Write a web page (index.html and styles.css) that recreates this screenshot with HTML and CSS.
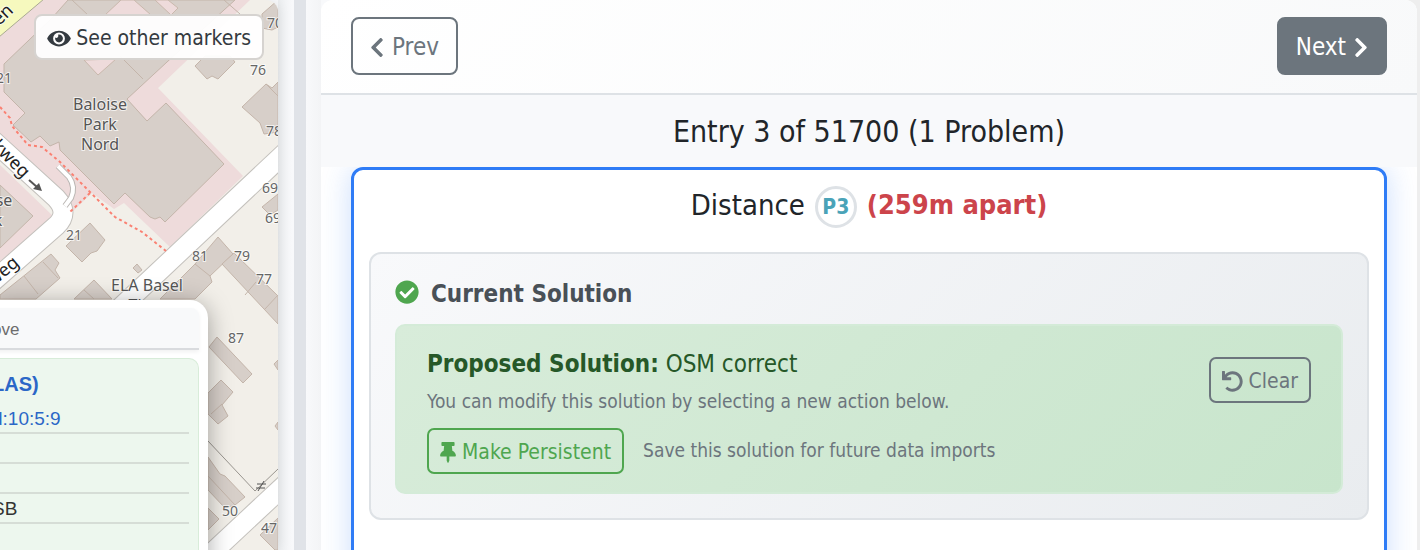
FILE: index.html
```html
<!DOCTYPE html>
<html lang="en">
<head>
<meta charset="utf-8">
<title>Problem entries</title>
<link rel="stylesheet" href="styles.css">
</head>
<body>
<main class="layout">
  <section class="map" aria-label="Map">
    <svg class="map-tiles" viewBox="0 0 278 550" preserveAspectRatio="xMinYMin slice">
      <g class="landuse">
        <path d="M0 0H250L158 88L243 176L170 247L124 203L114 209L92 193L72 212L40 175L0 142Z"/>
        <path d="M0 165L54 217L0 262Z"/>
      </g>
      <g class="building">
        <path d="M68 0L52 18L4 64V92L25 113L13 125L31 142L40 136L50 146L59 142L60 150L92 182L114 204L125 193L150 217L155 219L160 217L165 222L224 164L166 103L147 121L127 99L180 50L235 0Z"/>
        <path d="M0 185L33 216L0 248Z"/>
        <path d="M90 223L105 240L97 251L91 253L82 262L66 246Z"/>
        <path d="M0 295L51 254L59 263L55 270L60 278L36 299H0Z"/>
        <path d="M74 299L94 280L112 299ZM133 268L137 264L142 270L138 273Z"/>
        <path d="M160 299L195 264L218 237L233 254L210 276L212 282L195 299Z"/>
        <path d="M222 264L234 253L278 296V324Z"/>
        <path d="M195 66L205 56H230L235 62L218 79L212 76L207 79Z"/>
        <path d="M242 107L266 84L272 88L278 82V132L264 134L260 123Z"/>
        <path d="M278 0L262 14L262 28L272 30L278 27ZM278 194L262 207L270 215L278 210Z"/>
        <path d="M217 337L252 374L243 383L209 347Z"/>
        <path d="M221 380L233 392L222 405L228 416L218 424L208 414V393Z"/>
        <path d="M208 457L220 474L225 476L245 497L235 505L225 508L208 490Z"/>
        <path d="M208 508L219 519L208 530ZM278 518L260 535L275 550H278ZM278 360L274 364L278 370ZM278 422L275 426L278 430Z"/>
      </g>
      <g class="landuse edged">
        <path d="M121 0L105 15H151L134 0Z"/>
        <path d="M84 60L98 75L116 59Z"/>
        <path d="M155 0L171 15L178 8L168 0Z"/>
      </g>
      <g class="building-line">
        <path d="M72 0L88 15M120 56L143 79M224 0L240 14M195 264L210 276M245 295L256 282M265 309L278 295M24 276L38 294M43 262L58 278M208 476L235 505M211 414L222 404M84 290L94 299M266 84L278 96"/>
      </g>
      <path class="road-casing" d="M290 148L120 308"/>
      <path class="road" d="M290 148L120 308"/>
      <path class="road-casing" d="M-12 136L56 198Q70 213 56 226L-10 284"/>
      <path class="road" d="M-12 136L56 198Q70 213 56 226L-10 284"/>
      <path class="lane-casing" d="M58 166L69 177Q76 187 71 198L65 206"/>
      <path class="lane" d="M58 166L69 177Q76 187 71 198L65 206"/>
      <path class="road-casing" d="M290 480L200 564"/>
      <path class="road" d="M290 480L200 564"/>
      <path class="yellow-road" d="M-1 -1H44L-1 37Z"/>
      <path class="footpath" d="M0 107L10 118L12 126L28 145L42 147L60 162L88 190L115 217L142 232L166 251M90 193L70 212"/>
      <path class="barrier" d="M208 441L255 491L278 469"/>
      <path class="road-arrow" d="M29 180L37 187"/>
      <path class="road-arrow-head" d="M42 191L33 189L39 183Z"/>
      <g class="street-label">
        <text transform="translate(-9 147) rotate(45)">kweg</text>
        <text transform="translate(-7 287) rotate(-40)">weg</text>
        <text transform="translate(-9 34) rotate(-44)">pen</text>
        <text transform="translate(26 0) rotate(-44)">d</text>
      </g>
      <g class="place-label">
        <text x="100" y="110">Baloise</text>
        <text x="100" y="130">Park</text>
        <text x="100" y="150">Nord</text>
        <text x="147" y="291">ELA Basel</text>
        <text x="147" y="311">Thea</text>
        <text x="4" y="206">se</text>
        <text x="-2" y="226">k</text>
      </g>
      <g class="house-label">
        <text x="4" y="83">21</text><text x="258" y="75">76</text><text x="275" y="28">70</text>
        <text x="274" y="136">78</text><text x="270" y="193">69</text><text x="273" y="223">69</text>
        <text x="74" y="240">21</text><text x="200" y="261">81</text><text x="242" y="261">79</text>
        <text x="264" y="284">77</text><text x="236" y="343">87</text><text x="230" y="516">50</text>
        <text x="269" y="533">47</text>
      </g>
      <path class="gate" d="M257 484H266M256 488H265M258 491L264 481"/>
    </svg>
    <button class="markers-btn" type="button">
      <svg class="icon-eye" viewBox="0 0 576 512" aria-hidden="true"><path d="M572.52 241.4C518.29 135.59 410.93 64 288 64S57.68 135.64 3.48 241.41a32.35 32.35 0 0 0 0 29.19C57.71 376.41 165.07 448 288 448s230.32-71.64 284.52-177.41a32.35 32.35 0 0 0 0-29.19zM288 400a144 144 0 1 1 144-144 143.93 143.93 0 0 1-144 144zm0-240a95.31 95.31 0 0 0-25.31 3.79 47.85 47.85 0 0 1-66.9 66.9A95.78 95.78 0 1 0 288 160z"/></svg>
      See other markers
    </button>
    <div class="popup">
      <div class="popup-bar">ove</div>
      <div class="popup-body">
        <div class="popup-title">LAS)</div>
        <div class="popup-row popup-link">d:10:5:9</div>
        <div class="popup-row"></div>
        <div class="popup-row"></div>
        <div class="popup-row">SB</div>
      </div>
    </div>
  </section>
  <div class="divider"></div>
  <section class="panel">
    <nav class="panel-nav">
      <button class="nav-btn" type="button">
        <svg class="icon-chevron" viewBox="0 0 320 512" aria-hidden="true"><path d="M34.52 239.03L228.87 44.69c9.37-9.37 24.57-9.37 33.94 0l22.67 22.67c9.36 9.36 9.37 24.52.04 33.9L131.49 256l154.02 154.75c9.34 9.38 9.32 24.54-.04 33.9l-22.67 22.67c-9.37 9.37-24.57 9.37-33.94 0L34.52 272.97c-9.37-9.37-9.37-24.57 0-33.94z"/></svg>
        Prev
      </button>
      <button class="nav-btn nav-btn-solid" type="button">
        Next
        <svg class="icon-chevron" viewBox="0 0 320 512" aria-hidden="true"><path d="M285.476 272.971L91.132 467.314c-9.373 9.373-24.569 9.373-33.941 0l-22.667-22.667c-9.357-9.357-9.375-24.522-.04-33.901L188.505 256 34.484 101.255c-9.335-9.379-9.317-24.544.04-33.901l22.667-22.667c9.373-9.373 24.569-9.373 33.941 0L285.475 239.03c9.373 9.372 9.373 24.568.001 33.941z"/></svg>
      </button>
    </nav>
    <h1 class="entry-title">Entry 3 of 51700 (1 Problem)</h1>
    <div class="panel-body">
      <article class="problem">
        <h2 class="problem-title">
          <span class="problem-name">Distance</span>
          <span class="priority">P3</span>
          <strong class="apart">(259m apart)</strong>
        </h2>
        <section class="solution">
          <h3 class="solution-title">
            <svg class="icon-check" viewBox="0 0 512 512" aria-hidden="true"><circle cx="256" cy="256" r="240"/><path d="M504 256c0 136.967-111.033 248-248 248S8 392.967 8 256 119.033 8 256 8s248 111.033 248 248zM227.314 387.314l184-184c6.248-6.248 6.248-16.379 0-22.627l-22.627-22.627c-6.248-6.249-16.379-6.249-22.628 0L216 308.118l-70.059-70.059c-6.248-6.248-16.379-6.248-22.628 0l-22.627 22.627c-6.248 6.248-6.248 16.379 0 22.627l104 104c6.249 6.249 16.379 6.249 22.628.001z"/></svg>
            Current Solution
          </h3>
          <div class="proposal">
            <div class="proposal-text">
              <p class="proposal-name"><strong>Proposed Solution:</strong> OSM correct</p>
              <p class="hint">You can modify this solution by selecting a new action below.</p>
              <div class="persist">
                <button class="action-btn action-btn-green" type="button">
                  <svg class="icon-pin" viewBox="0 0 384 512" aria-hidden="true"><path d="M298.028 214.267L285.793 96H328c13.255 0 24-10.745 24-24V24c0-13.255-10.745-24-24-24H56C42.745 0 32 10.745 32 24v48c0 13.255 10.745 24 24 24h42.207L85.972 214.267C37.465 236.82 0 277.261 0 328c0 13.255 10.745 24 24 24h136v104.007c0 1.242.289 2.467.845 3.578l24 48c2.941 5.882 11.364 5.893 14.311 0l24-48a8.008 8.008 0 0 0 .845-3.578V352h136c13.255 0 24-10.745 24-24-.001-51.183-37.983-91.42-85.973-113.733z"/></svg>
                  Make Persistent
                </button>
                <span class="hint">Save this solution for future data imports</span>
              </div>
            </div>
            <button class="action-btn action-btn-clear" type="button">
              <svg class="icon-undo" viewBox="0 0 512 512" aria-hidden="true"><path d="M212.333 224.333H12c-6.627 0-12-5.373-12-12V12C0 5.373 5.373 0 12 0h48c6.627 0 12 5.373 12 12v78.112C117.773 39.279 184.26 7.47 258.175 8.007c136.906.994 246.448 111.623 246.157 248.532C504.041 393.258 393.12 504 256.333 504c-64.089 0-122.496-24.313-166.51-64.215-5.099-4.622-5.334-12.554-.467-17.42l33.967-33.967c4.474-4.474 11.662-4.717 16.401-.525C170.76 415.336 211.58 432 256.333 432c97.268 0 176-78.716 176-176 0-97.267-78.716-176-176-176-58.496 0-110.28 28.476-142.274 72.333h98.274c6.627 0 12 5.373 12 12v48c0 6.627-5.373 12-12 12z"/></svg>
              Clear
            </button>
          </div>
        </section>
      </article>
    </div>
  </section>
</main>
</body>
</html>
```
FILE: styles.css
```css
* { box-sizing: border-box; }

body {
  margin: 0;
  overflow: hidden;
  background: #f8f9fa;
  color: #212529;
  font-family: "DejaVu Sans Condensed", "DejaVu Sans", sans-serif;
  font-stretch: condensed;
}

h1, h2, h3, p { margin: 0; font-weight: 400; }

button { font-family: inherit; font-stretch: inherit; white-space: nowrap; cursor: pointer; }

svg { fill: currentColor; flex: none; }

.layout {
  display: flex;
  height: 100vh;
  padding-right: 3px;
  background: linear-gradient(90deg, #f8f9fb 99%, #eeeeee 99%);
}

/* Map */
.map {
  position: relative;
  flex: 0 0 278px;
  overflow: hidden;
  border-radius: 0 12px 0 0;
  background: #f2efe9;
  box-shadow: 0 0 12px rgba(0, 0, 0, 0.1);
}

.map-tiles { display: block; width: 100%; height: 100%; fill: none; }
.landuse { fill: #eedbdb; }
.edged { stroke: #c9b8ac; stroke-width: 1; }
.building { fill: #d7cfc9; stroke: #c4b5aa; stroke-width: 1; }
.building-line { stroke: #c4b5aa; }
.road-casing { stroke: #c3c0bc; stroke-width: 21; }
.road { stroke: #ffffff; stroke-width: 19; }
.lane-casing { stroke: #bbb7b4; stroke-width: 6; }
.lane { stroke: #ffffff; stroke-width: 4; }
.yellow-road { fill: #f6f9be; stroke: #a9aa92; stroke-width: 1; }
.footpath { stroke: #fa8072; stroke-width: 2; stroke-dasharray: 3 3; }
.barrier { stroke: #99958f; }
.gate { stroke: #555555; }
.road-arrow { stroke: #555555; stroke-width: 2; }
.road-arrow-head { fill: #555555; }

.street-label, .place-label, .house-label {
  font-family: "Noto Sans", sans-serif;
  font-stretch: normal;
  paint-order: stroke;
  stroke: rgba(255, 255, 255, 0.7);
  stroke-width: 2px;
}
.street-label { fill: #222222; font-size: 18px; }
.place-label { fill: #555555; font-size: 16px; text-anchor: middle; }
.house-label { fill: #666666; font-size: 14px; text-anchor: middle; }

.markers-btn {
  position: absolute;
  top: 14px;
  right: 14px;
  display: flex;
  align-items: center;
  gap: 5px;
  height: 46px;
  padding: 2px 11px 0;
  border: 2px solid #d6d3d0;
  border-radius: 8px;
  background: rgba(255, 255, 255, 0.94);
  color: #343a40;
  font-size: 21px;
}
.icon-eye { width: 24px; height: 21px; }

.popup {
  position: absolute;
  top: 300px;
  left: -8px;
  width: 216px;
  height: 300px;
  padding: 8px 9px 0 0;
  border-radius: 0 18px 0 0;
  background: #ffffff;
  box-shadow: 0 4px 24px rgba(0, 0, 0, 0.35);
  font-family: "Liberation Sans", Arial, sans-serif;
  font-size: 19px;
  color: #333333;
}
.popup-bar {
  height: 42px;
  border-bottom: 2px solid #d9dbde;
  border-radius: 0 8px 0 0;
  background: #f8f9fa;
  box-shadow: 0 2px 4px rgba(0, 0, 0, 0.06);
  color: #6c6c6c;
  font-size: 17px;
  line-height: 44px;
}
.popup-body {
  height: 240px;
  margin-top: 8px;
  padding: 8px 9px 0 0;
  border: 1px solid #d8ecd9;
  border-left: 0;
  border-radius: 0 10px 0 0;
  background: #edf7ee;
}
.popup-title { height: 37px; color: #2b67c7; font-size: 20px; font-weight: 700; line-height: 34px; }
.popup-row { height: 30px; border-bottom: 2px solid #d6ddd6; line-height: 30px; }
.popup-link { color: #2b67c7; }

.divider {
  flex: 0 0 43px;
  background: linear-gradient(90deg, #eceef0 0, #f8f9fb 14px, #f8f9fb 16px, transparent 16px, transparent 28px, #f8f9fb 28px, #f3f4f6 43px);
  background-color: #e0e3e8;
}

/* Entry panel */
.panel {
  flex: 1;
  min-width: 0;
  overflow: hidden;
  border-radius: 12px 12px 0 0;
  background: #ffffff;
}

.panel-nav {
  display: flex;
  justify-content: space-between;
  padding: 17px 30px 18px;
  border-bottom: 2px solid #dee2e6;
  background: linear-gradient(135deg, #ffffff, #f8f9fa);
}

.nav-btn {
  display: flex;
  align-items: center;
  gap: 8px;
  height: 58px;
  padding: 2px 17px 0;
  border: 2px solid #6c757d;
  border-radius: 8px;
  background: transparent;
  color: #6c757d;
  font-size: 24px;
}
.nav-btn-solid { background: #6c757d; color: #ffffff; }
.icon-chevron { width: 14px; height: 23px; }

.entry-title {
  position: relative;
  z-index: 1;
  padding: 17px 30px 15px;
  background: #f8f9fb;
  font-size: 30px;
  line-height: 40px;
  text-align: center;
}

.panel-body { padding: 0 30px; }

.problem {
  height: 480px;
  padding: 15px;
  border: 3px solid #2f7cf6;
  border-radius: 12px;
  box-shadow: 0 0 30px rgba(47, 124, 246, 0.25);
}

.problem-title {
  display: flex;
  align-items: center;
  justify-content: center;
  gap: 10px;
  height: 44px;
  font-size: 29px;
}
.problem-name, .apart { padding-bottom: 5px; }
.priority {
  display: grid;
  place-items: center;
  width: 42px;
  height: 42px;
  border: 3px solid #dee2e6;
  border-radius: 50%;
  color: #4aa3b8;
  font-size: 21px;
  font-weight: 700;
}
.apart { color: #cc444b; font-size: 27px; }

.solution {
  margin-top: 23px;
  padding: 24px;
  border: 2px solid #dee2e6;
  border-radius: 12px;
  background: linear-gradient(135deg, #f8f9fb, #e9ecef);
}
.solution-title {
  display: flex;
  align-items: center;
  gap: 12px;
  height: 32px;
  margin-bottom: 14px;
  color: #495057;
  font-size: 24px;
  font-weight: 700;
}
.icon-check { width: 24px; height: 24px; margin-bottom: 5px; color: #4fa64f; }
.icon-check circle { fill: #ffffff; }

.proposal {
  display: flex;
  align-items: flex-start;
  justify-content: space-between;
  padding: 18px 30px;
  border: 2px solid #d4ebd8;
  border-radius: 10px;
  background: linear-gradient(135deg, #d8ecda, #c8e5cc);
}
.proposal-name { color: #265828; font-size: 24px; line-height: 40px; }
.hint { color: #6c757d; font-size: 19px; line-height: 34px; }
.persist { display: flex; align-items: center; gap: 19px; margin-top: 10px; }
.persist .hint { padding-bottom: 3px; }

.action-btn {
  display: flex;
  align-items: center;
  gap: 6px;
  height: 46px;
  padding: 2px 11px 0;
  border: 2px solid #6c757d;
  border-radius: 7px;
  background: transparent;
  color: #6c757d;
  font-size: 21px;
}
.action-btn-clear { margin-top: 13px; }
.action-btn-green { border-color: #4fa64f; color: #4fa64f; }
.icon-pin { width: 16px; height: 21px; }
.icon-undo { width: 21px; height: 21px; }
```
